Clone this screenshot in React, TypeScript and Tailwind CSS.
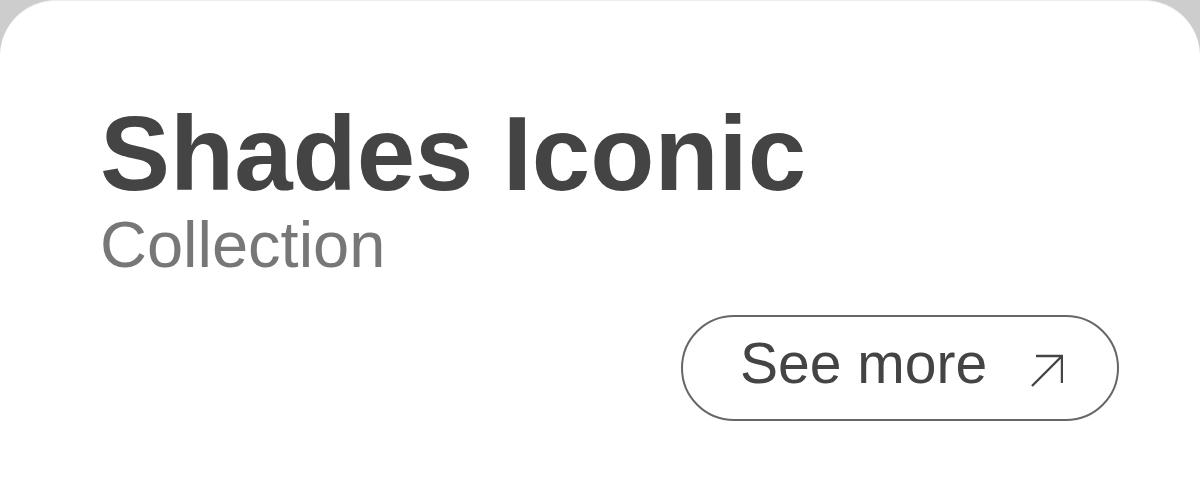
export default function App() {
  return (
    <div className="h-[477px] w-full overflow-hidden bg-[#cdcdcd]" style={{ fontFamily: '"Liberation Sans", Arial, sans-serif' }}>
      <div className="h-full w-full rounded-t-[56px] border-t border-[#ececec] bg-white pl-[100px] pt-[100px]">
        <h1 className="text-[105px] font-bold leading-none text-[#444444]">Shades Iconic</h1>
        <p className="mt-[6px] text-[65px] leading-none text-[#777777]">Collection</p>
        <div className="mt-[38px] flex justify-end pr-[81px]">
          <button className="flex h-[106px] w-[438px] items-center rounded-full border-2 border-[#666666] pb-[9px] pl-[57px]">
            <span className="text-[57px] leading-none text-[#444444]">See more</span>
            <svg className="ml-[36px] mt-[8px]" width="40" height="40" viewBox="0 0 40 40" fill="none">
              <path d="M9 38 L39 8 M13 8 H39 V35" stroke="#444444" strokeWidth="2.4" />
            </svg>
          </button>
        </div>
      </div>
    </div>
  );
}
